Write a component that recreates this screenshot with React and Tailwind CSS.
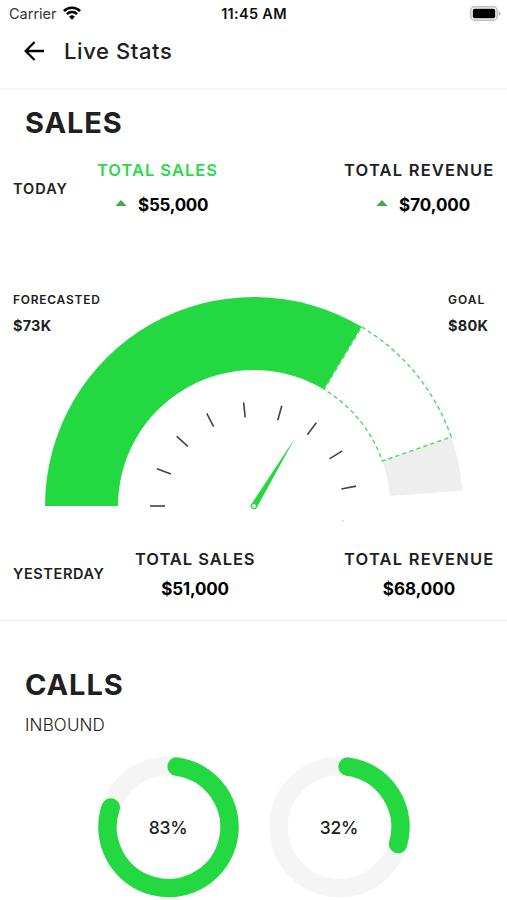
import React from 'react';

const CX = 254;
const CY = 226;
const OUTER = 209;
const INNER = 136;

const polar = (cx, cy, r, deg) => {
  const a = (deg * Math.PI) / 180;
  return `${(cx + r * Math.cos(a)).toFixed(2)} ${(cy - r * Math.sin(a)).toFixed(2)}`;
};

const band = (from, to) =>
  `M${polar(CX, CY, OUTER, from)} A${OUTER} ${OUTER} 0 0 1 ${polar(CX, CY, OUTER, to)} ` +
  `L${polar(CX, CY, INNER, to)} A${INNER} ${INNER} 0 0 0 ${polar(CX, CY, INNER, from)} Z`;

const ticks = [180, 159, 138, 117, 95.7, 74.5, 53.2, 32, 11];

const Gauge = () => (
  <svg className="block w-full h-[242px]" viewBox="0 280 507 242" fill="none">
    <g transform="translate(0 280)">
      <path d={band(19.3, 4.2)} fill="#eeeeee" />
      <path d={band(180, 59)} fill="#23d841" />
      <path d={band(59, 19.3)} fill="#ffffff" stroke="#56d96b" strokeWidth="1.5" strokeDasharray="4.2 3.2" />
      {ticks.map((t) => (
        <path key={t} d={`M${polar(CX, CY, 89, t)} L${polar(CX, CY, 104, t)}`} stroke="#444444" strokeWidth="1.6" />
      ))}
      <path d="M342 241h2" stroke="#cccccc" strokeWidth="1" />
      {/* Needle */}
      <path d="M295 158 L256.7 227.7 A3.1 3.1 0 0 1 251.3 224.3 Z" fill="#23d841" />
      <circle cx="254" cy="226" r="2.5" fill="#ffffff" stroke="#23d841" strokeWidth="1.1" />
    </g>
  </svg>
);

const Ring = ({ value, end }) => (
  <div className="relative w-[142px] h-[142px] flex items-center justify-center">
    <svg className="absolute inset-0" width="142" height="142" viewBox="0 0 142 142" fill="none">
      <circle cx="71.5" cy="71" r="61" stroke="#f5f5f5" strokeWidth="18.5" />
      <path
        d={`M${polar(71.5, 71, 61, 82.3)} A61 61 0 ${end > 188 ? 1 : 0} 1 ${polar(71.5, 71, 61, 90 - end)}`}
        stroke="#23d841"
        strokeWidth="18.5"
        strokeLinecap="round"
      />
    </svg>
    <span className="relative text-[17.5px] leading-6 font-medium tracking-[-0.25px] mt-[2px]">{value}</span>
  </div>
);

const Up = () => (
  <svg className="w-3 h-1.5 -mt-1" viewBox="0 0 12 6">
    <path d="M0.4 6 L6 0 L11.6 6 Z" fill="#43a94a" />
  </svg>
);

const App = () => {
  return (
    <div className="w-full h-[900px] overflow-hidden bg-white text-[#202020] font-['Inter',sans-serif] whitespace-nowrap">
      {/* Status bar */}
      <div className="h-[27px] grid grid-cols-3 items-center pl-[9px] pr-[6px] text-[#111]">
        <div className="flex items-center gap-[6px]">
          <span className="text-[14.5px] leading-5 text-[#333]">Carrier</span>
          <svg className="w-[18px] h-[14px] -mt-[2px]" viewBox="0 0 18 14" fill="none" stroke="#000" strokeWidth="2.5">
            <path d="M0.9 5.1 A11.4 11.4 0 0 1 17.1 5.1" />
            <path d="M3.9 8.2 A7.2 7.2 0 0 1 14.1 8.2" />
            <path d="M9 13.7 L6.1 10.8 A4.1 4.1 0 0 1 11.9 10.8 Z" fill="#000" stroke="none" />
          </svg>
        </div>
        <span className="-ml-[2px] text-center text-[14.5px] leading-5 font-semibold tracking-[0.3px]">11:45 AM</span>
        <svg className="justify-self-end w-[31px] h-[15px]" viewBox="0 0 31 15">
          <rect x="0.8" y="0.8" width="26.4" height="13.4" rx="3.8" fill="#fff" stroke="#bdbdbd" strokeWidth="1.5" />
          <rect x="2.8" y="2.8" width="22.4" height="9.4" rx="1.8" fill="#000" />
          <path d="M28.6 5.3 Q30.6 6 30.6 7.5 Q30.6 9 28.6 9.7 Z" fill="#b5b5b5" />
        </svg>
      </div>

      {/* Header */}
      <div className="h-[63px] flex items-start pl-6 border-b-2 border-[#f6f6f6]">
        <svg className="mt-[14px] w-5 h-5" viewBox="0 0 20 20" fill="none" stroke="#000" strokeWidth="2.3">
          <path d="M20 10H2M10.6 1 L1.7 10 L10.6 19" />
        </svg>
        <h1 className="ml-5 mt-[8px] text-[22px] leading-8 font-medium tracking-[0.6px]">Live Stats</h1>
      </div>

      {/* Sales */}
      <h2 className="h-[66px] pt-[13px] pl-[25px] text-[29px] leading-10 font-bold tracking-[0.9px]">SALES</h2>
      <div className="h-[124px] flex pl-[13px] pr-[13px]">
        <div className="w-[84px] pt-[23px] text-[14.5px] leading-5 font-semibold tracking-[1px]">TODAY</div>
        <div className="w-[120px] pt-[4px]">
          <div className="text-[16.5px] leading-5 font-semibold tracking-[0.98px] text-[#2bd94a]">TOTAL SALES</div>
          <div className="mt-[15px] pl-[18px] flex items-center gap-[11px] text-[17px] leading-5 font-bold tracking-[-0.25px] text-black">
            <Up />
            <span>$55,000</span>
          </div>
        </div>
        <div className="ml-auto w-[150px] pt-[4px]">
          <div className="text-[16.5px] leading-5 font-semibold tracking-[1.2px]">TOTAL REVENUE</div>
          <div className="mt-[15px] pl-8 flex items-center gap-[11px] text-[17px] leading-5 font-bold text-black">
            <Up />
            <span>$70,000</span>
          </div>
        </div>
      </div>

      <div className="relative">
        <Gauge />
        <div className="absolute left-[13px] top-[10px]">
          <div className="text-[12px] leading-5 font-semibold tracking-[0.74px]">FORECASTED</div>
          <div className="mt-[6px] text-[14.5px] leading-5 font-bold tracking-[0.2px]">$73K</div>
        </div>
        <div className="absolute left-[448px] top-[10px]">
          <div className="text-[12px] leading-5 font-semibold tracking-[1px]">GOAL</div>
          <div className="mt-[6px] text-[14.5px] leading-5 font-bold tracking-[0.3px]">$80K</div>
        </div>
      </div>

      <div className="h-[99px] flex pl-[13px] pr-[13px] border-b border-[#eeeeee]">
        <div className="w-[122px] pt-[42px] text-[14.5px] leading-5 font-semibold tracking-[0.6px]">YESTERDAY</div>
        <div className="w-[120px] pt-[27px]">
          <div className="text-[16.5px] leading-5 font-semibold tracking-[0.95px]">TOTAL SALES</div>
          <div className="mt-[10px] text-center text-[17px] leading-5 font-bold tracking-[-0.2px] text-black">$51,000</div>
        </div>
        <div className="ml-auto w-[150px] pt-[27px]">
          <div className="text-[16.5px] leading-5 font-semibold tracking-[1.2px]">TOTAL REVENUE</div>
          <div className="mt-[10px] text-center text-[17px] leading-5 font-bold text-black">$68,000</div>
        </div>
      </div>

      {/* Calls */}
      <div className="pt-[44px] pl-[25px]">
        <h2 className="text-[29px] leading-10 font-bold tracking-[0.9px]">CALLS</h2>
        <p className="mt-[10px] text-[17px] leading-5 font-light tracking-[0.15px]">INBOUND</p>
      </div>
      <div className="mt-[21px] pl-[97px] flex gap-[29px]">
        <Ring value="83%" end={288.7} />
        <Ring value="32%" end={106.2} />
      </div>
    </div>
  );
};

export default App;
